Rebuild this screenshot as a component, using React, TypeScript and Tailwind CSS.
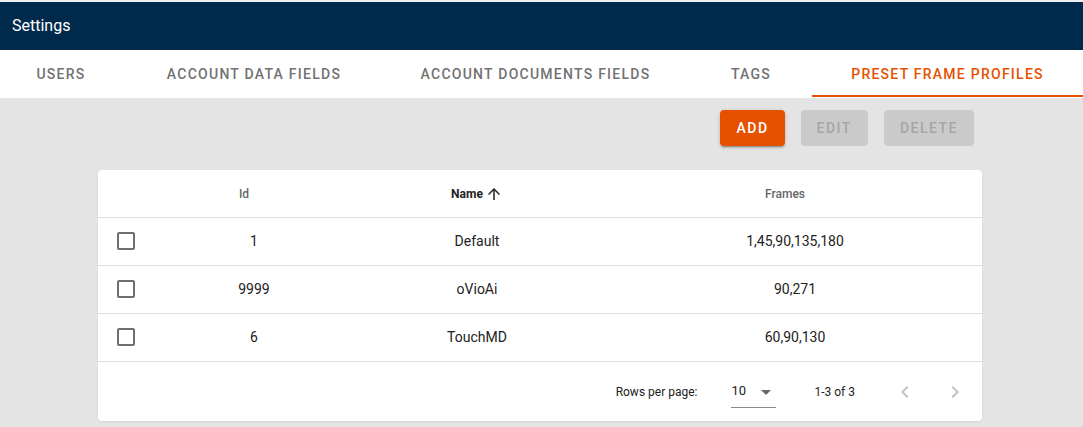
import React from "react";

const tabs = [
  { label: "Users", w: "w-[122px]", pad: "" },
  { label: "Account Data Fields", w: "w-[259px]", pad: "pl-[5px]" },
  { label: "Account Documents Fields", w: "w-[309px]", pad: "" },
  { label: "Tags", w: "w-[122px]", pad: "" },
  { label: "Preset Frame Profiles", w: "w-[271px]", pad: "" },
];

const rows = [
  { id: "1", name: "Default", frames: "1,45,90,135,180" },
  { id: "9999", name: "oVioAi", frames: "90,271" },
  { id: "6", name: "TouchMD", frames: "60,90,130" },
];

const cols = "grid grid-cols-[56px_200px_246px_382px]";

function Checkbox() {
  return <div className="h-[18px] w-[18px] rounded-[2px] border-2 border-[#6f6f6f]" />;
}

function SortSlot({ active }: { active?: boolean }) {
  return (
    <svg
      viewBox="0 0 24 24"
      className={`ml-[2px] h-[18px] w-[18px] ${active ? "fill-[#222]" : "fill-transparent"}`}
    >
      <path d="M4 12l1.41 1.41L11 7.83V20h2V7.83l5.58 5.59L20 12l-8-8-8 8z" />
    </svg>
  );
}

export default function App() {
  const active = tabs.length - 1;
  return (
    <div className="min-h-[427px] w-full bg-[#e4e4e4] font-['Roboto',sans-serif]">
      <div className="h-[2px] bg-[#eeeeee]" />
      <header className="flex h-[48px] items-center bg-[#002a4b] px-3 text-[16px] text-white">
        Settings
      </header>

      <nav className="flex h-[48px] bg-white">
        {tabs.map((t, i) => (
          <div
            key={t.label}
            className={`relative flex shrink-0 items-center justify-center text-[14px] font-medium uppercase tracking-[1.25px] ${t.w} ${t.pad} ${
              i === active ? "text-[#e65100]" : "text-[#727272]"
            }`}
          >
            {t.label}
            {i === active && (
              <span className="absolute bottom-[1px] left-0 right-0 h-[2px] bg-[#e65100]" />
            )}
          </div>
        ))}
      </nav>

      <div className="flex justify-center pr-[3px]">
        <div className="w-[884px]">
          <div className="flex justify-end pt-3">
            <button className="mx-2 h-9 min-w-16 rounded bg-[#e65100] px-4 text-[14px] font-medium uppercase tracking-[1.5px] text-white shadow-[0_3px_1px_-2px_rgba(0,0,0,0.2),0_2px_2px_0_rgba(0,0,0,0.14),0_1px_5px_0_rgba(0,0,0,0.12)]">
              Add
            </button>
            <button className="mx-2 h-9 min-w-16 rounded bg-[#cacaca] px-4 text-[14px] font-medium uppercase tracking-[1.5px] text-[#a6a6a6]">
              Edit
            </button>
            <button className="mx-2 h-9 min-w-16 rounded bg-[#cacaca] px-4 text-[14px] font-medium uppercase tracking-[1.5px] text-[#a6a6a6]">
              Delete
            </button>
          </div>

          <div className="mt-6 rounded bg-white shadow-[0_1px_2px_rgba(0,0,0,0.08)]">
            <div className={`${cols} h-[48px] items-center border-b border-[#e0e0e0] text-[12px] font-medium text-[#666]`}>
              <div />
              <div className="flex items-center justify-center">
                Id
                <SortSlot />
              </div>
              <div className="flex items-center justify-center font-bold text-[#222]">
                Name
                <SortSlot active />
              </div>
              <div className="flex items-center justify-center pl-[8px]">
                Frames
                <SortSlot />
              </div>
            </div>

            {rows.map((r) => (
              <div
                key={r.id}
                className={`${cols} h-[48px] items-center border-b border-[#e0e0e0] text-[14px] text-[#222]`}
              >
                <div className="flex justify-center pb-[2px]">
                  <Checkbox />
                </div>
                <div className="text-center">{r.id}</div>
                <div className="text-center">{r.name}</div>
                <div className="pl-[8px] text-center">{r.frames}</div>
              </div>
            ))}

            <div className="flex h-[59px] items-center justify-end pr-[3px] text-[12px] text-[#222]">
              <span>Rows per page:</span>
              <div className="relative ml-[34px] flex h-[32px] w-[45px] items-center border-b border-[#8a8a8a]">
                <span className="text-[13px]">10</span>
                <svg viewBox="0 0 24 24" className="absolute right-[-2px] top-[4px] h-6 w-6 fill-[#666]">
                  <path d="M7 10l5 5 5-5z" />
                </svg>
              </div>
              <span className="ml-[38px]">1-3 of 3</span>
              <div className="ml-[26px] flex">
                <div className="flex h-12 w-12 items-center justify-center">
                  <svg viewBox="0 0 24 24" className="h-6 w-6 fill-[#c2c2c2]">
                    <path d="M15.41 16.59L10.83 12l4.58-4.59L14 6l-6 6 6 6 1.41-1.41z" />
                  </svg>
                </div>
                <div className="ml-[2px] flex h-12 w-12 items-center justify-center">
                  <svg viewBox="0 0 24 24" className="h-6 w-6 fill-[#c2c2c2]">
                    <path d="M8.59 16.59L13.17 12 8.59 7.41 10 6l6 6-6 6-1.41-1.41z" />
                  </svg>
                </div>
              </div>
            </div>
          </div>
        </div>
      </div>
    </div>
  );
}
